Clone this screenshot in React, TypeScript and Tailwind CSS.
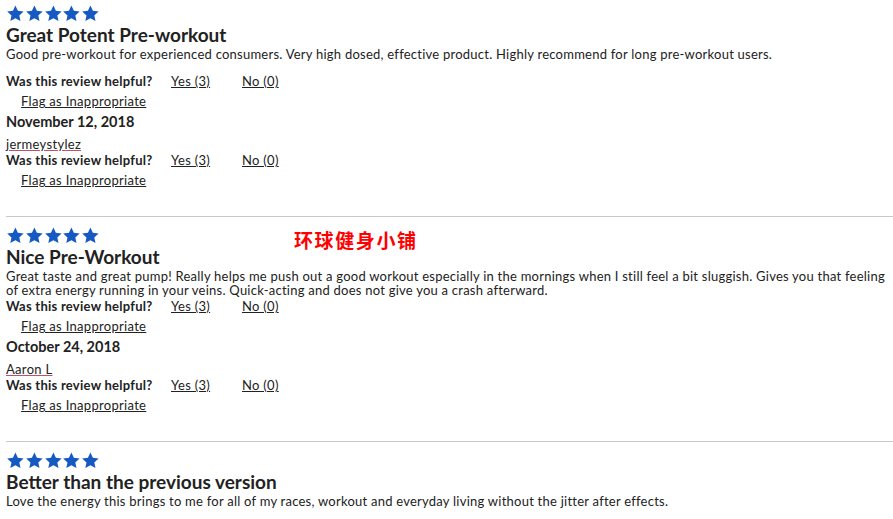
import React from "react";

interface Review {
    title: string;
    body: string[];
    date?: string;
    user?: string;
    extraGap?: boolean;
    watermark?: boolean;
}

const reviews: Review[] = [
    {
        title: "Great Potent Pre-workout",
        body: [
            "Good pre-workout for experienced consumers. Very high dosed, effective product. Highly recommend for long pre-workout users.",
        ],
        date: "November 12, 2018",
        user: "jermeystylez",
        extraGap: true,
    },
    {
        title: "Nice Pre-Workout",
        body: [
            "Great taste and great pump! Really helps me push out a good workout especially in the mornings when I still feel a bit sluggish. Gives you that feeling",
            "of extra energy running in your veins. Quick-acting and does not give you a crash afterward.",
        ],
        date: "October 24, 2018",
        user: "Aaron L",
        watermark: true,
    },
    {
        title: "Better than the previous version",
        body: [
            "Love the energy this brings to me for all of my races, workout and everyday living without the jitter after effects.",
        ],
    },
];

function Stars() {
    return (
        <div className="flex h-[18px] items-center">
            {[0, 1, 2, 3, 4].map((i) => (
                <svg key={i} width="18.8" height="17" viewBox="0 0 24 23" className="shrink-0">
                    <path
                        d="M12 0.8l3.3 7.1 7.8 0.9-5.8 5.3 1.6 7.7L12 17.9l-6.9 3.9 1.6-7.7L0.9 8.8l7.8-0.9z"
                        fill="#1559c2"
                    />
                </svg>
            ))}
        </div>
    );
}

function Helpful() {
    return (
        <>
            <div className="flex h-[20px] items-center text-[13px] tracking-[0.3px]">
                <span className="w-[165px] font-bold tracking-[0.25px]">Was this review helpful?</span>
                <span className="w-[71px] underline">Yes (3)</span>
                <span className="underline">No (0)</span>
            </div>
            <div className="flex h-[20px] items-center pl-[15px] text-[13px] tracking-[0.3px]">
                <span className="underline">Flag as Inappropriate</span>
            </div>
        </>
    );
}

export default function App() {
    return (
        <div
            className="min-h-[519px] w-[893px] overflow-hidden bg-white pl-[6px] text-[#222]"
            style={{ fontFamily: "Lato, 'Noto Sans', sans-serif" }}
        >
            {reviews.map((r, idx) => (
                <div key={idx} className={idx > 0 ? "border-t border-[#c8c8c8] pt-[9px]" : "pt-[4px]"}>
                    <div className="relative">
                        <Stars />
                        {r.watermark && (
                            <span
                                className="absolute left-[288px] top-[0px] text-[19px] font-bold tracking-[1.6px] text-[#ff0000]"
                                style={{ fontFamily: "'Noto Sans CJK SC', sans-serif" }}
                            >
                                环球健身小铺
                            </span>
                        )}
                    </div>
                    <div className="flex h-[24px] items-center text-[19px] font-bold leading-none">{r.title}</div>
                    <div
                        className={`pt-[1px] text-[13px] leading-[14px] tracking-[0.24px] ${r.extraGap ? "pb-[11px]" : ""}`}
                    >
                        {r.body.map((line, i) => (
                            <div key={i} className="whitespace-nowrap">
                                {line}
                            </div>
                        ))}
                    </div>
                    {r.date && (
                        <div className="pb-[25px]">
                            <Helpful />
                            <div className="flex h-[20px] items-center text-[14.5px] font-bold leading-none">
                                {r.date}
                            </div>
                            <div className="flex h-[19px] items-end text-[13px] leading-[14px] tracking-[0.3px]">
                                <span className="underline decoration-[#c0506a]">{r.user}</span>
                            </div>
                            <Helpful />
                        </div>
                    )}
                </div>
            ))}
        </div>
    );
}
